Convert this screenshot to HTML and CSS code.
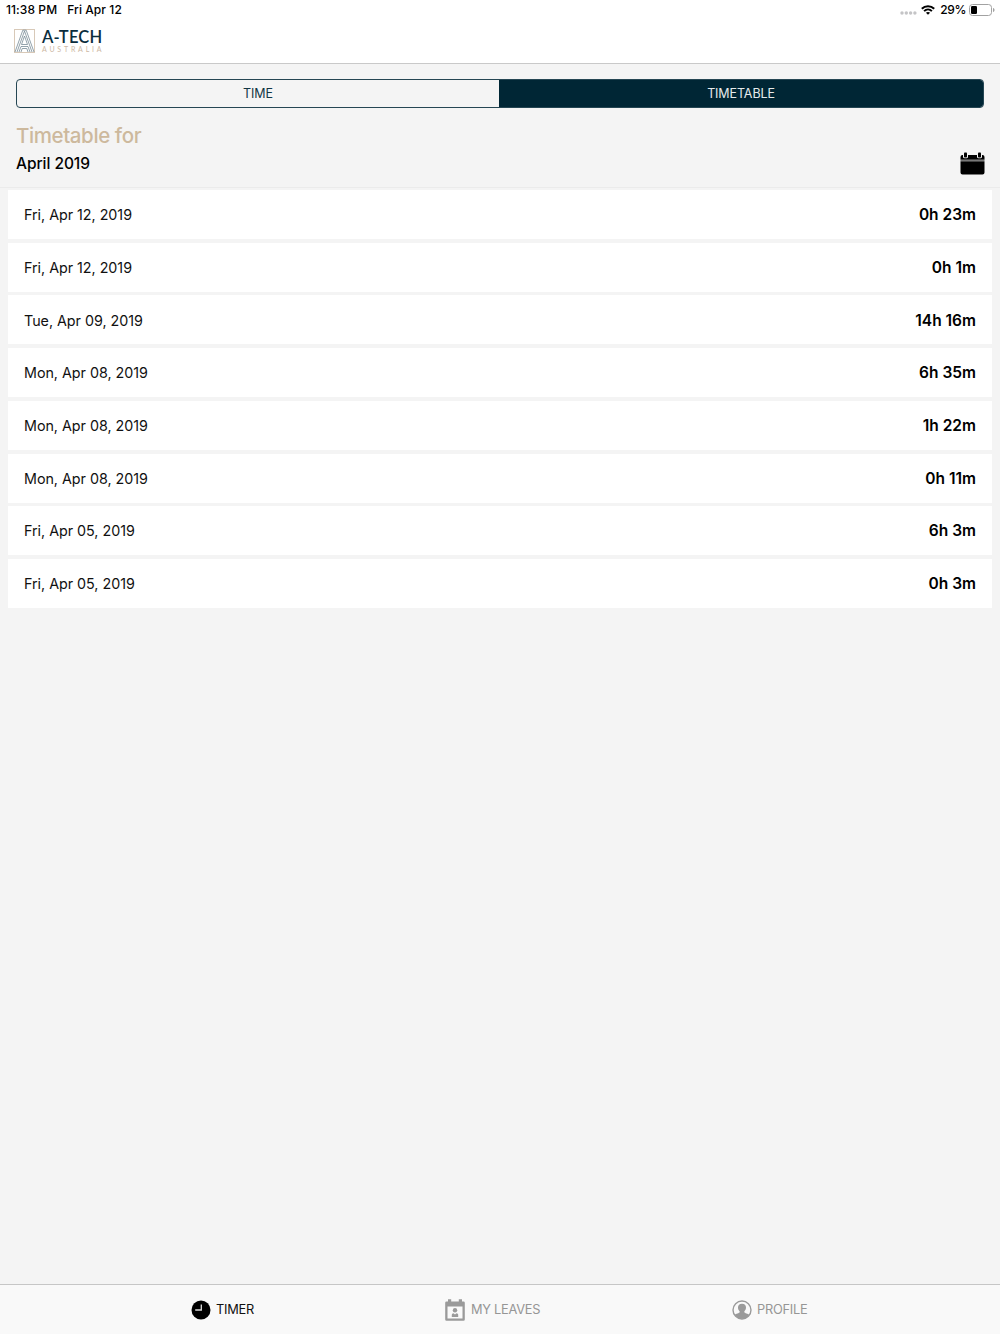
FILE: index.html
```html
<!DOCTYPE html>
<html lang="en">
<head>
<meta charset="utf-8">
<title>A-Tech Timetable</title>
<link rel="stylesheet" href="styles.css">
</head>
<body>
<div class="app">
  <header class="header">
    <div class="status">
      <div class="status-left"><span class="clock">11:38 PM</span><span class="day">Fri Apr 12</span></div>
      <div class="status-right">
        <svg class="signal" width="17" height="4" viewBox="0 0 17 4" fill="#c4c4c6"><circle cx="2" cy="2" r="1.7"/><circle cx="6.3" cy="2" r="1.7"/><circle cx="10.6" cy="2" r="1.7"/><circle cx="14.9" cy="2" r="1.7"/></svg>
        <svg class="wifi" width="14" height="10" viewBox="0 0 14 10" fill="none" stroke="#000" stroke-width="2"><path d="M.8 3.8C4.2.3 9.8.3 13.2 3.8"/><path d="M3.1 6.1c2.2-2.1 5.6-2.1 7.8 0"/><path d="M7 9.8 4.9 7.7c1.2-1 3-1 4.2 0z" fill="#000" stroke="none"/></svg>
        <span class="percent">29%</span>
        <svg class="battery" width="26" height="12" viewBox="0 0 26 12"><rect x=".5" y=".5" width="22" height="11" rx="3" fill="none" stroke="#a2a2a2"/><rect x="2" y="2" width="6" height="8" rx="1.2"/><path d="M24 4c2 .5 2 3.500 0 4z" fill="#a2a2a2"/></svg>
      </div>
    </div>
    <div class="brand">
      <svg class="logo" width="21" height="24" viewBox="0 0 21 24" fill="none"><rect x=".5" y=".5" width="20" height="23" stroke="#d8c9b8"/><g stroke="#6f8490" stroke-width=".75"><path d="M1 23 8.800 1.200h3.400L20 23"/><path d="M3 23 10.500 2 18 23"/><path d="M5 23 7 17.500h7L16 23"/><path d="M7 23l1.200-3.500h4.600L14 23"/><path d="M7.500 15.500 10.500 7l3 8.500z"/></g></svg>
      <div class="brand-text"><span class="brand-name">A-TECH</span><span class="brand-sub">AUSTRALIA</span></div>
    </div>
  </header>

  <section class="top">
    <div class="segments">
      <div class="segment"><span>TIME</span></div>
      <div class="segment active"><span>TIMETABLE</span></div>
    </div>
    <div class="period">
      <div>
        <h1 class="title">Timetable for</h1>
        <div class="month">April 2019</div>
      </div>
      <svg class="calendar" width="25" height="23" viewBox="0 0 25 23"><path d="M.5 9.200h24V20.500a2 2 0 0 1-2 2h-20a2 2 0 0 1-2-2zM.5 7.800V5a2 2 0 0 1 2-2H3v2a1.500 1.500 0 0 0 1.500 1.300h2A1.500 1.500 0 0 0 8 5V3h9v2a1.500 1.500 0 0 0 1.500 1.300h2A1.500 1.500 0 0 0 22 5V3h.5a2 2 0 0 1 2 2v2.800z"/><path d="M.5 8.500h24" stroke="#777" stroke-width="1.200"/><rect x="4" y=".5" width="3" height="5" rx=".8"/><rect x="18" y=".5" width="3" height="5" rx=".8"/></svg>
    </div>
  </section>

  <main class="list">
    <div class="row"><span class="date">Fri, Apr 12, 2019</span><span class="hours">0h 23m</span></div>
    <div class="row"><span class="date">Fri, Apr 12, 2019</span><span class="hours">0h 1m</span></div>
    <div class="row"><span class="date">Tue, Apr 09, 2019</span><span class="hours">14h 16m</span></div>
    <div class="row"><span class="date">Mon, Apr 08, 2019</span><span class="hours">6h 35m</span></div>
    <div class="row"><span class="date">Mon, Apr 08, 2019</span><span class="hours">1h 22m</span></div>
    <div class="row"><span class="date">Mon, Apr 08, 2019</span><span class="hours">0h 11m</span></div>
    <div class="row"><span class="date">Fri, Apr 05, 2019</span><span class="hours">6h 3m</span></div>
    <div class="row"><span class="date">Fri, Apr 05, 2019</span><span class="hours">0h 3m</span></div>
  </main>

  <nav class="tabs">
    <div class="tab timer">
      <svg width="20" height="20" viewBox="0 0 20 20"><circle cx="10" cy="10" r="9.500"/><path d="M10.300 4.500v5.500H4.200" fill="none" stroke="#ddd" stroke-width="1.300"/></svg>
      <span>TIMER</span>
    </div>
    <div class="tab leaves">
      <svg width="20" height="22" viewBox="0 0 20 22" fill="#9a9a9a"><path fill-rule="evenodd" d="M1.500 2.500H3V.3h3.200v2.200h7.600V.3H17v2.200h1.500a1.300 1.300 0 0 1 1.300 1.300v16.700a1.300 1.300 0 0 1-1.300 1.300h-17A1.300 1.300 0 0 1 .2 20.500V3.800a1.300 1.300 0 0 1 1.300-1.300zM2.500 7.500v12h15v-12z"/><circle cx="10" cy="11.300" r="2.200"/><path d="M6.800 18v-2.200q0-1.500 1.600-1.500L10 15.500l1.600-1.200q1.600 0 1.600 1.500V18z"/></svg>
      <span>MY LEAVES</span>
    </div>
    <div class="tab profile">
      <svg width="20" height="20" viewBox="0 0 20 20" fill="#9a9a9a"><circle cx="10" cy="10" r="9" fill="none" stroke="#9a9a9a" stroke-width="1.400"/><path d="M10 3.800c2.600 0 4 1.500 4 3.800 0 1.600-.7 3-1.700 3.800v.8c.3 1 3.900 1.100 4.900 2.900A8.500 8.500 0 0 1 10 18.800a8.500 8.500 0 0 1-7.200-3.700c1-1.800 4.600-1.900 4.900-2.900v-.8C6.700 10.600 6 9.200 6 7.600c0-2.300 1.400-3.800 4-3.800z"/></svg>
      <span>PROFILE</span>
    </div>
  </nav>
</div>
</body>
</html>
```
FILE: styles.css
```css
* { box-sizing: border-box; }
body { margin: 0; font-family: Inter, "Liberation Sans", sans-serif; color: #000; background: #f4f4f4; }
svg { display: block; flex: none; }
span { white-space: nowrap; }
.app { height: 1334px; display: flex; flex-direction: column; overflow: hidden; }
.header { height: 64px; background: #fff; border-bottom: 1px solid #c9c9c9; }
.status { height: 20px; padding: 0 5px 0 6px; display: flex; justify-content: space-between; align-items: center; font-size: 12px; font-weight: 500; line-height: 20px; letter-spacing: .08px; }
.status-left, .status-right { display: flex; align-items: center; }
.status-left { gap: 10px; }
.signal { margin: 6px 4px 0 0; }
.wifi { margin-right: 5px; }
.percent { margin-right: 3px; letter-spacing: -.4px; }
.brand { display: flex; padding: 9px 0 0 14px; gap: 7px; }
.brand-text { display: flex; flex-direction: column; }
.brand-name { font: 600 16.500px/16px Lato, sans-serif; color: #0b2d3d; letter-spacing: .2px; }
.brand-sub { font: 400 7px/9px Lato, sans-serif; color: #cdb8a4; letter-spacing: 2.800px; }
.top { height: 124px; padding: 15px 16px 0; border-bottom: 1px solid #ebebeb; }
.segments { height: 29px; display: flex; border: 1px solid #254653; border-radius: 4px; overflow: hidden; }
.segment { width: 482px; padding-bottom: 1px; display: flex; align-items: center; justify-content: center; font-size: 12.500px; letter-spacing: -.1px; color: #123644; }
.active { flex: 1; background: #002635; color: #e6eaec; }
.period { display: flex; justify-content: space-between; align-items: flex-end; height: 68px; }
.title { margin: 0; font-size: 20.500px; line-height: 28px; font-weight: 500; letter-spacing: -.4px; color: #cdb99d; }
.month { font-size: 15.500px; line-height: 28px; font-weight: 500; letter-spacing: -.05px; margin-bottom: -2px; }
.calendar { margin: 0 -1px 1px 0; }
.list { flex: 1; padding: 2px 8px 0; display: flex; flex-direction: column; gap: 3.710px; }
.row { height: 49px; flex: none; background: #fff; padding: .5px 16px 0; display: flex; justify-content: space-between; align-items: center; }
.date { font-size: 14.300px; letter-spacing: -.02px; color: #111; }
.hours { font-size: 15.500px; font-weight: 600; }
.tabs { height: 50px; flex: none; border-top: 1px solid #c6c6c6; background: #f9f9f9; display: grid; grid-template-columns: 191px 254px 287px 1fr; }
.tab { display: flex; align-items: center; gap: 6px; font-size: 12.800px; letter-spacing: -.25px; color: #969696; }
.timer { grid-column: 2; color: #111; gap: 5px; }
.profile { gap: 5px; }
```
